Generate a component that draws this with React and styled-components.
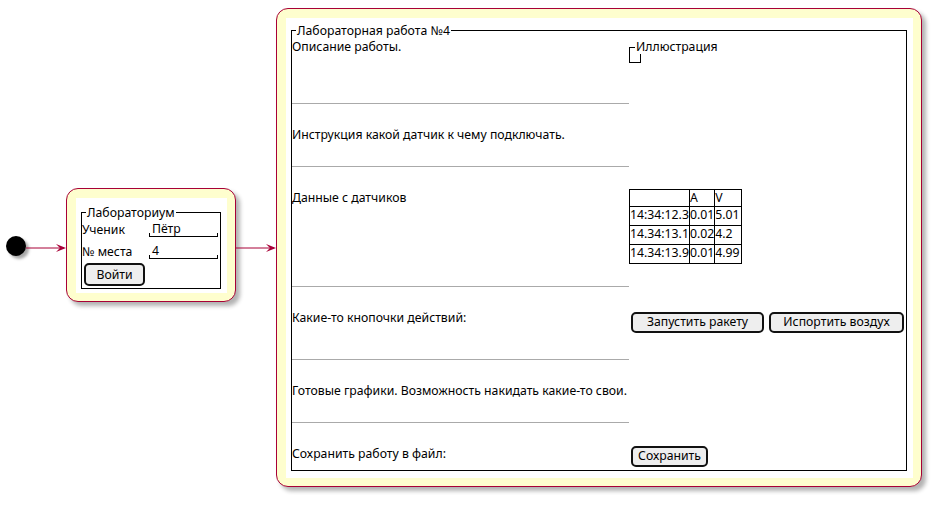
import React from "react";
import styled, { createGlobalStyle } from "styled-components";

const GlobalStyle = createGlobalStyle`
  body {
    margin: 0;
    background: #fff;
    color: #000;
    font-family: "Noto Sans", "DejaVu Sans", sans-serif;
    font-size: 12.25px;
  }
`;

const Page = styled.div`
  display: flex;
  align-items: center;
  width: 940px;
  height: 495px;
`;

const StartDot = styled.div`
  flex-shrink: 0;
  width: 20px;
  height: 20px;
  margin: -3px 0 0 6px;
  border-radius: 50%;
  background: #000;
  box-shadow: 3px 3px 3px rgba(0, 0, 0, 0.35);
`;

const State = styled.div`
  flex-shrink: 0;
  box-sizing: border-box;
  display: flex;
  width: ${(p) => p.$w}px;
  height: ${(p) => p.$h}px;
  margin-top: ${(p) => p.$shift || 0}px;
  padding: 8.5px;
  background: #fefece;
  border: 1.5px solid #a80036;
  border-radius: 12px;
  box-shadow: 4px 4px 4px rgba(0, 0, 0, 0.3);
`;

const Panel = styled.div`
  flex: 1;
  background: #fff;
  padding: ${(p) => p.$pad};
`;

const Frame = styled.fieldset`
  box-sizing: border-box;
  width: ${(p) => p.$w}px;
  min-width: 0;
  margin: 0;
  padding: 0;
  border: 1px solid #000;
`;

const Legend = styled.legend`
  margin-left: 4px;
  padding: 0 1px;
  line-height: 15px;
`;

const LoginGrid = styled.div`
  display: grid;
  grid-template-columns: 67px 69px;
  grid-template-rows: 22px 19px 23px;
  align-items: start;
  padding: 2px 0;
`;

const Label = styled.div`
  line-height: 15px;
`;

const Field = styled.div`
  position: relative;
  height: 14px;
  line-height: 14px;
  padding-left: 3px;
  border-bottom: 1px solid #000;

  &::before,
  &::after {
    content: "";
    position: absolute;
    bottom: 0;
    width: 1px;
    height: 3px;
    background: #000;
  }
  &::before {
    left: 0;
  }
  &::after {
    right: 0;
  }
`;

const Button = styled.button`
  box-sizing: border-box;
  width: ${(p) => p.$w}px;
  height: ${(p) => p.$h || 21}px;
  margin-left: ${(p) => p.$ml || 0}px;
  padding: 0;
  background: #eee;
  border: 2px solid #111;
  border-radius: 5px;
  color: #000;
  font-family: inherit;
  font-size: 12.25px;
  line-height: 16px;
`;

const Row = styled.div`
  display: grid;
  grid-template-columns: 337px 1fr;
  height: ${(p) => p.$h}px;
`;

const LeftCell = styled.div`
  padding-top: ${(p) => p.$pt}px;
  border-top: ${(p) => (p.$sep ? "1px solid #aaa" : "none")};
  line-height: 15px;
  white-space: nowrap;
`;

const RightCell = styled.div`
  display: flex;
  align-items: flex-start;
  gap: 5px;
  padding-top: ${(p) => p.$pt}px;
  padding-left: ${(p) => p.$pl || 0}px;
`;

const GroupBox = styled.div`
  position: relative;
  width: 10px;
  height: 14px;
  margin-top: 7.5px;
  border: 1px solid #000;
`;

const GroupTitle = styled.span`
  position: absolute;
  top: -8.5px;
  left: 5px;
  padding: 0 1px;
  background: #fff;
  line-height: 15px;
  white-space: nowrap;
`;

const DataTable = styled.table`
  border-collapse: collapse;
  font-size: 12.25px;
`;

const Tr = styled.tr`
  height: ${(p) => p.$h}px;
`;

const Td = styled.td`
  width: ${(p) => p.$w}px;
  padding: 0;
  border: 1px solid #000;
  line-height: 15px;
  vertical-align: top;
  white-space: nowrap;
`;

const Arrow = () => (
  <svg width="40" height="10" viewBox="0 0 40 10" style={{ flexShrink: 0 }}>
    <line x1="0" y1="5" x2="38" y2="5" stroke="#a80036" strokeWidth="1" />
    <polygon points="40,5 30,1 34,5 30,9" fill="#a80036" />
  </svg>
);

const readings = [
  ["14:34:12.3", "0.01", "5.01"],
  ["14.34:13.1", "0.02", "4.2"],
  ["14.34:13.9", "0.01", "4.99"],
];

const App = () => {
  return (
    <>
      <GlobalStyle />
      <Page>
        <StartDot />
        <Arrow />
        <State $w={170} $h={114} $shift={-5}>
          <Panel $pad="7.5px 5px 0 5.5px">
            <Frame $w={140}>
              <Legend>Лабораториум</Legend>
              <LoginGrid>
                <Label>Ученик</Label>
                <Field>Пётр</Field>
                <Label>№ места</Label>
                <Field>4</Field>
                <Button $w={61} $h={23} $ml={2}>Войти</Button>
              </LoginGrid>
            </Frame>
          </Panel>
        </State>
        <Arrow />
        <State $w={646} $h={479}>
          <Panel $pad="5px 5px 0 5.5px">
            <Frame $w={616}>
              <Legend>Лабораторная работа №4</Legend>
              <Row $h={65}>
                <LeftCell $pt={1.5}>Описание работы.</LeftCell>
                <RightCell $pt={1.5}>
                  <GroupBox>
                    <GroupTitle>Иллюстрация</GroupTitle>
                  </GroupBox>
                </RightCell>
              </Row>
              <Row $h={63}>
                <LeftCell $sep $pt={23}>Инструкция какой датчик к чему подключать.</LeftCell>
                <RightCell />
              </Row>
              <Row $h={120}>
                <LeftCell $sep $pt={23}>Данные с датчиков</LeftCell>
                <RightCell $pt={23}>
                  <DataTable>
                    <tbody>
                      <Tr $h={17}>
                        <Td $w={59}></Td>
                        <Td $w={24}>A</Td>
                        <Td $w={26}>V</Td>
                      </Tr>
                      {readings.map((r) => (
                        <Tr $h={19} key={r[0]}>
                          <Td>{r[0]}</Td>
                          <Td>{r[1]}</Td>
                          <Td>{r[2]}</Td>
                        </Tr>
                      ))}
                    </tbody>
                  </DataTable>
                </RightCell>
              </Row>
              <Row $h={73}>
                <LeftCell $sep $pt={23}>Какие-то кнопочки действий:</LeftCell>
                <RightCell $pt={26} $pl={2}>
                  <Button $w={133}>Запустить ракету</Button>
                  <Button $w={135}>Испортить воздух</Button>
                </RightCell>
              </Row>
              <Row $h={63}>
                <LeftCell $sep $pt={23}>Готовые графики. Возможность накидать какие-то свои.</LeftCell>
                <RightCell />
              </Row>
              <Row $h={48}>
                <LeftCell $sep $pt={23}>Сохранить работу в файл:</LeftCell>
                <RightCell $pt={24} $pl={2}>
                  <Button $w={77}>Сохранить</Button>
                </RightCell>
              </Row>
            </Frame>
          </Panel>
        </State>
      </Page>
    </>
  );
};

export default App;
